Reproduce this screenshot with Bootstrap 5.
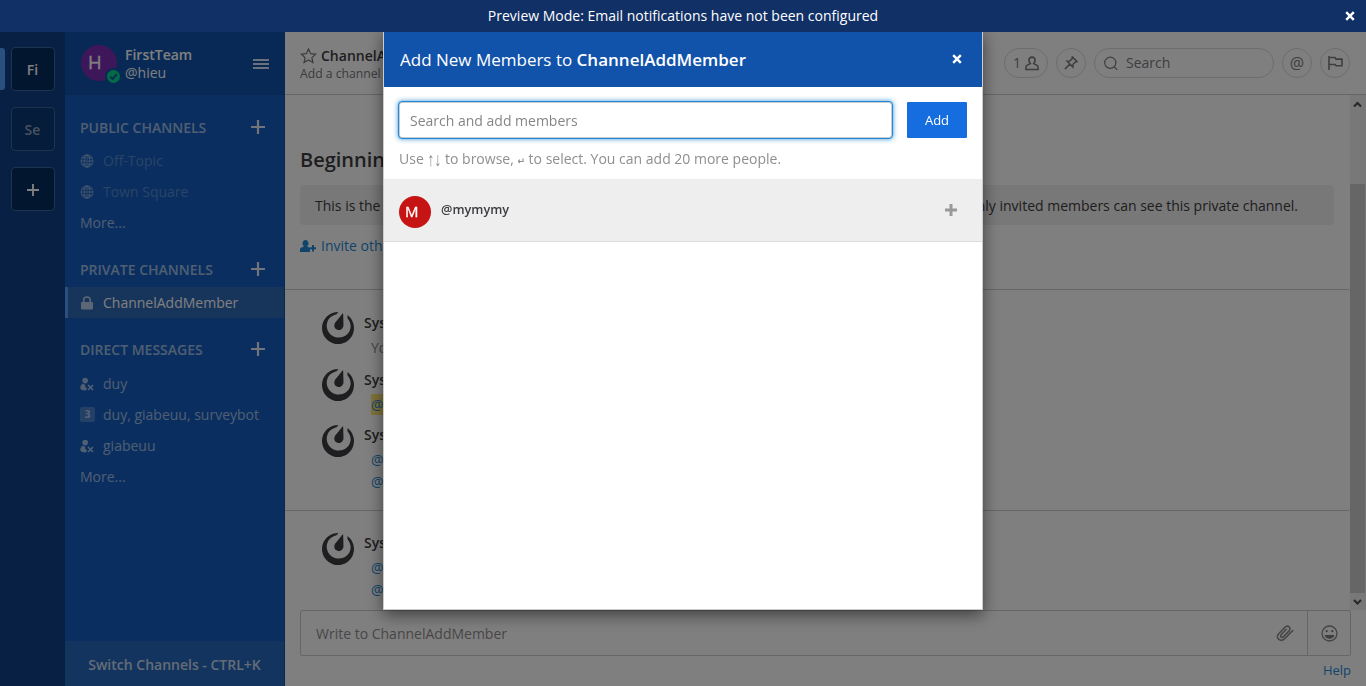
<!DOCTYPE html>
<html lang="en">
<head>
<meta charset="utf-8">
<title>ChannelAddMember - FirstTeam</title>
<link href="https://cdn.jsdelivr.net/npm/bootstrap@5.3.0/dist/css/bootstrap.min.css" rel="stylesheet">
<style>
body{font-family:"Open Sans",sans-serif;font-size:14px;line-height:20px;color:#3d3c40;height:100vh;overflow:hidden}
svg{display:block;flex:none}
a{color:#2389d7;text-decoration:none}
.announce{height:32px;background:#113066;z-index:1070;position:relative}
.announce-close{right:11px}
.app-row{height:654px}
.teams{width:65px;background:#0e4187;padding-top:15px;gap:16px}
.team-tile{width:44px;height:44px;border:1px solid #3b679f;border-radius:4px;color:rgba(255,255,255,.55);background:#0b3875;font-weight:600;padding-top:2px}
.team-tile.dark-tile{background:#062c61;color:#fff}
.team-mark{left:0;top:16px;width:5px;height:42px;background:#579eff;border-radius:0 3px 3px 0}
.side{width:220px;background:#145dbf;color:rgba(255,255,255,.6);border-right:1px solid #1253aa}
.side-head{height:63px;background:#1153ab;padding:13px 15px 0 16px;color:#fff}
.side-head .names{line-height:18px;padding-top:1px}
.side-head .bars{margin-top:14px}
.face{width:36px;height:36px;border-radius:50%;background:#7b2eb3;font-size:18.5px;line-height:34px;padding-left:7px;-webkit-text-stroke:.3px #fff}
.presence{left:24px;top:23px}
.sect{height:49px;padding:22px 19px 0 15px;font-weight:600}
.sect.tall{height:50px}
.sect.first{padding-top:23px}
.sect svg{color:#e3ebf6;margin-top:2px}
.chan{height:31px;padding-left:15px}
.chan .ico{width:23px}
.muted-chan{color:rgba(255,255,255,.28)}
.chan.current{background:#2f6ab7;border-left:3px solid #579eff;padding-left:12px;color:#fff}
.count{width:15px;height:15px;border-radius:2px;background:rgba(255,255,255,.22);font-size:10px;line-height:15px;font-weight:700;text-align:center}
.switcher{height:45px;background:#2769bd;color:rgba(255,255,255,.75);font-weight:600;padding:2px 0 0 0}
.top-bar{height:63px;border-bottom:1px solid #ccc;padding:0 16px 0 15px}
.chan-title{line-height:18px;padding-top:3px}
.topic{font-size:12.2px;color:#77767a}
.pill{height:30px;border:1px solid #dadada;border-radius:15px;color:#7d7c7f}
.round{width:30px}
.feed{height:515px;overflow:hidden}
.intro{height:195px;padding:54px 15px 0;border-bottom:1px solid #ccc}
.intro h4{font-size:20px;font-weight:600;line-height:22px}
.notice{background:#f0f0f0;border-radius:4px;height:40px;padding:2px 36px 0 15px;margin-top:14px}
.post{padding-left:37px;line-height:22px}
.post svg{margin-right:10px;fill:#3d3c40}
.raised{margin-top:-1px}
.said{margin:3px 0 0 7px}
.tag{background:#ffe577;padding:1px 0}
.scroller{width:16px;background:#f1f1f1}
.thumb{width:15px;margin-top:71px;height:409px;background:#cdcdcd}
.composer{height:46px;border:1px solid #ccc;border-radius:2px;margin:0 15px;color:#8f8e90}
.composer .prompt{padding:2px 0 0 15px}
.emoji{width:43px;border-left:1px solid #ccc}
.help-row{padding:4px 15px 0;font-size:13px}
.modal-backdrop{opacity:.5!important}
.modal-dialog{width:600px;max-width:600px;margin:30px auto 0}
.modal-content{height:580px;border:1px solid rgba(0,0,0,.2);border-radius:0;background-clip:border-box;box-shadow:0 5px 15px rgba(0,0,0,.5);color:#3d3c40}
.modal-header{height:56px;background:#1153ab;color:#fff;border:0;border-radius:0;padding:2px 20px 0 16px;font-size:17px}
.modal-header svg{margin-top:-2px}
.find-row{padding:15px 15px 0}
.finder{width:493px;height:36px;border:1px solid #ccc;border-radius:3px;padding:0 10px;font-size:14px;outline:1px solid #2389d7;box-shadow:0 0 5px 1px rgba(35,137,215,.9)}
.finder::placeholder{color:#858585}
.btn-add{width:60px;height:36px;background:#166de0;color:#fff;border:0;border-radius:1px;font-size:13px;padding:2px 0 0}
.hint{color:#8f8e90;margin-top:11px;padding:0 15px;height:20px}
.arrows{font-family:"Liberation Sans",sans-serif;display:inline-block;line-height:16px;transform:scaleY(1.4)}
.enter{font:bold 9px "DejaVu Sans",sans-serif}
.person{height:63px;background:#eee;border-bottom:1px solid #ddd;margin-top:10px;padding:0 25px 0 15px}
.person-face{width:32px;height:32px;border-radius:50%;background:#c61414;color:#fff;font-size:15px;line-height:31px;padding-left:6px;margin-top:4px;-webkit-text-stroke:.3px #fff}
.person b{font-size:12.7px;margin:0 0 2px 10px}
.person svg{margin-bottom:1px}
</style>
</head>
<body>
<svg class="d-none">
<symbol id="mm" viewBox="0 0 24 24"><path d="M12.081 0C7.048-.034 2.339 3.125.637 8.153c-2.125 6.276 1.24 13.086 7.516 15.21 6.276 2.125 13.086-1.24 15.21-7.516 1.727-5.1-.172-10.552-4.311-13.557l.126 2.547c2.065 2.282 2.88 5.512 1.852 8.549-1.534 4.532-6.594 6.915-11.3 5.321-4.708-1.593-7.28-6.559-5.745-11.092 1.031-3.046 3.655-5.121 6.694-5.67l1.642-1.94A4.87 4.87 0 0 0 12.08 0zm3.528 1.094a.284.284 0 0 0-.123.024l-.004.001a.33.33 0 0 0-.109.071c-.145.142-.657.828-.657.828L13.6 3.4l-1.3 1.585-2.232 2.776s-1.024 1.278-.798 2.851c.226 1.574 1.396 2.34 2.304 2.648.907.307 2.302.408 3.438-.704 1.135-1.112 1.098-2.75 1.098-2.75l-.087-3.56-.07-2.05-.047-1.775s.01-.856-.02-1.057a.33.33 0 0 0-.035-.107l-.006-.012-.007-.011a.277.277 0 0 0-.229-.14z"/></symbol>
<symbol id="plus" viewBox="0 0 14 14"><path d="M7 0v14M0 7h14" stroke="currentColor" stroke-width="2.2"/></symbol>
<symbol id="globe" viewBox="0 0 14 14"><g fill="none" stroke="currentColor" stroke-width="1.4"><circle cx="7" cy="7" r="6"/><ellipse cx="7" cy="7" rx="2.8" ry="6"/><path d="M1 7h12M7 1v12M2 3.8h10M2 10.2h10"/></g></symbol>
<symbol id="gone" viewBox="0 0 14 14"><circle cx="5.200" cy="3.600" r="2.800" fill="currentColor"/><path d="M2.600 6.400 5.400 8 5 9.500 7 11.200 6 13.500Q1 13.700.3 11.300 0 8.500 2.600 6.400z" fill="currentColor"/><path d="m8 8 5 5m0-5-5 5" stroke="currentColor" stroke-width="1.700"/></symbol>
<symbol id="cross" viewBox="0 0 10 10"><path d="m1.200 1.200 7.600 7.600m0-7.600L1.200 8.800" stroke="currentColor" stroke-width="2.400"/></symbol>
</svg>

<div class="announce d-flex align-items-center justify-content-center text-white">Preview Mode: Email notifications have not been configured
  <svg class="announce-close position-absolute" width="10" height="10"><use href="#cross"/></svg>
</div>

<div class="app-row d-flex">
  <nav class="teams d-flex flex-column align-items-center position-relative">
    <span class="team-mark position-absolute"></span>
    <div class="team-tile dark-tile d-flex align-items-center justify-content-center">Fi</div>
    <div class="team-tile d-flex align-items-center justify-content-center">Se</div>
    <div class="team-tile dark-tile d-flex align-items-center justify-content-center"><svg width="12" height="12"><use href="#plus"/></svg></div>
  </nav>

  <aside class="side d-flex flex-column">
    <div class="side-head d-flex">
      <div class="position-relative"><div class="face">H</div>
        <svg class="presence position-absolute" width="17" height="17" viewBox="0 0 17 17"><circle cx="8.500" cy="8.500" r="8.500" fill="#1153ab"/><circle cx="8.500" cy="8.500" r="6.500" fill="#06d68b"/><path d="m5.300 8.600 2.300 2.300 4.200-4.600" fill="none" stroke="#1153ab" stroke-width="1.900"/></svg>
      </div>
      <div class="names ms-2 flex-grow-1"><div class="fw-semibold">FirstTeam</div><div>@hieu</div></div>
      <svg class="bars" width="16" height="10" viewBox="0 0 16 10" fill="#d9e4f3"><path d="M0 0h16v2H0zM0 4h16v2H0zM0 8h16v2H0z"/></svg>
    </div>
    <div class="sect tall first d-flex justify-content-between">PUBLIC CHANNELS<svg width="14" height="14"><use href="#plus"/></svg></div>
    <div class="chan muted-chan d-flex align-items-center"><span class="ico"><svg width="14" height="14"><use href="#globe"/></svg></span>Off-Topic</div>
    <div class="chan muted-chan d-flex align-items-center"><span class="ico"><svg width="14" height="14"><use href="#globe"/></svg></span>Town Square</div>
    <div class="chan d-flex align-items-center">More...</div>
    <div class="sect d-flex justify-content-between">PRIVATE CHANNELS<svg width="14" height="14"><use href="#plus"/></svg></div>
    <div class="chan current d-flex align-items-center"><span class="ico"><svg width="14" height="14" viewBox="0 0 14 14"><path d="M1.500 6h11q.5 0 .5.500v6q0 1-1 1H2q-1 0-1-1v-6q0-.500.500-.500z" fill="#b9cde8"/><path d="M3.700 6V4.300a3.200 3.200 0 0 1 6.500 0V6" fill="none" stroke="#b9cde8" stroke-width="1.600"/></svg></span>ChannelAddMember</div>
    <div class="sect tall d-flex justify-content-between">DIRECT MESSAGES<svg width="14" height="14"><use href="#plus"/></svg></div>
    <div class="chan d-flex align-items-center"><span class="ico"><svg width="14" height="14"><use href="#gone"/></svg></span>duy</div>
    <div class="chan d-flex align-items-center"><span class="ico"><div class="count">3</div></span>duy, giabeuu, surveybot</div>
    <div class="chan d-flex align-items-center"><span class="ico"><svg width="14" height="14"><use href="#gone"/></svg></span>giabeuu</div>
    <div class="chan d-flex align-items-center">More...</div>
    <div class="switcher mt-auto d-flex align-items-center justify-content-center">Switch Channels - CTRL+K</div>
  </aside>

  <main class="flex-grow-1 bg-white">
    <header class="top-bar d-flex align-items-center">
      <div class="chan-title me-auto text-nowrap">
        <div class="d-flex align-items-center fw-semibold"><svg class="me-1" width="17" height="16" viewBox="0 0 17 16"><path d="m8.500 1 2.100 4.700 5.100.500-3.800 3.400 1.100 5L8.500 12 4 14.600l1.100-5L1.300 6.200l5.100-.500z" fill="none" stroke="#77767a" stroke-width="1.200"/></svg>ChannelA</div>
        <div class="topic">Add a channel</div>
      </div>
      <div class="pill d-flex align-items-center justify-content-center gap-1" style="width:44px">1<svg width="14" height="15" viewBox="0 0 15 15"><path d="M4.300 4.200a3.200 3.500 0 0 1 6.400 0c0 1.600-.7 2.600-1.400 3.400l4 2.100q.7.500.7 4.300H1q0-3.800.7-4.300l4-2.100C5 6.800 4.300 5.800 4.300 4.200z" fill="none" stroke="currentColor" stroke-width="1.700"/></svg></div>
      <div class="pill round ms-2 d-flex align-items-center justify-content-center"><svg width="14" height="14" viewBox="0 0 14 14" fill="none" stroke="currentColor" stroke-width="1.500"><path d="m8.300.9 4.800 4.800-1.600.2-2.500 2.400-.1 2.800L3.100 5.200l2.700-.1 2.400-2.500zM5.700 8.300.9 13.100"/></svg></div>
      <div class="pill ms-2 d-flex align-items-center" style="width:180px;padding-left:9px"><svg class="me-2" width="14" height="14" viewBox="0 0 14 14" fill="none" stroke="currentColor" stroke-width="1.200"><circle cx="6.300" cy="6.800" r="5.600"/><path d="m10.300 10.800 3 3"/></svg>Search</div>
      <div class="pill round ms-2 fs-6 d-flex align-items-center justify-content-center">@</div>
      <div class="pill round ms-2 d-flex align-items-center justify-content-center"><svg width="15" height="14" viewBox="0 0 15 14" fill="none" stroke="currentColor" stroke-width="1.600"><path d="M1 0v14M1 1.500h6l1 1.600h6v6.700H8L7 8.500H1"/></svg></div>
    </header>
    <div class="feed d-flex">
      <div class="flex-grow-1 overflow-hidden" style="margin-right:1px">
        <div class="intro"><h4 class="mb-0">Beginnin</h4>
          <div class="notice d-flex align-items-center justify-content-between text-nowrap"><span>This is the</span><span>Only invited members can see this private channel.</span></div>
          <a class="d-flex align-items-center" href="#" style="margin-top:11px"><svg width="16" height="13" viewBox="0 0 16 13" fill="currentColor" style="margin-right:5px"><path d="M5.500 0a3 3.300 0 0 1 2 5.800v1l2.500.9V12H0V9q0-1.200 3.500-2.300v-1A3 3.300 0 0 1 5.500 0zM12 5h2v2.200h2v2h-2v2.300h-2V9.200h-2v-2h2z"/></svg>Invite oth</a>
        </div>
        <div class="post d-flex" style="height:79px;padding-top:22px"><svg width="32" height="32"><use href="#mm"/></svg><div><b class="fw-semibold">Sys</b><div class="said" style="color:#8b8a8c">Yo</div></div></div>
        <div class="post d-flex" style="height:56px"><svg width="32" height="32"><use href="#mm"/></svg><div><b class="fw-semibold">Sys</b><div class="said"><a class="tag" href="#">@</a></div></div></div>
        <div class="post d-flex border-bottom" style="height:86px;border-color:#ccc!important"><svg width="32" height="32"><use href="#mm"/></svg><div class="raised"><b class="fw-semibold">Sys</b><div class="said"><a href="#">@</a><br><a href="#">@</a></div></div></div>
        <div class="post d-flex" style="padding-top:22px"><svg width="32" height="32"><use href="#mm"/></svg><div class="raised"><b class="fw-semibold">Sys</b><div class="said"><a href="#">@</a><br><a href="#">@</a></div></div></div>
      </div>
      <div class="scroller d-flex flex-column">
        <svg width="15" height="18" viewBox="0 0 15 18"><path d="m4 11.500 3.500-3.500 3.500 3.500" fill="none" stroke="#505050" stroke-width="2.200"/></svg>
        <div class="thumb"></div>
        <svg width="15" height="17" viewBox="0 0 15 17"><path d="m4 7 3.500 3.500L11 7" fill="none" stroke="#505050" stroke-width="2.200"/></svg>
      </div>
    </div>
    <div class="composer d-flex align-items-center"><span class="prompt me-auto">Write to ChannelAddMember</span>
      <svg width="18" height="17" viewBox="0 0 18 17" style="margin-right:13px" fill="none" stroke="currentColor" stroke-width="1.600" stroke-linecap="round"><path d="m16.800 5.500-7.600 7.800c-4.600 4.800-10.200-.4-6.700-4.300L8.600 2.600c3.400-3.400 7.200.4 4.400 3.500l-5.400 5.500c-1.900 1.900-4.200-.1-2.300-2.100l4.800-5"/></svg>
      <div class="emoji h-100 d-flex align-items-center justify-content-center"><svg width="17" height="17" viewBox="0 0 17 17"><circle cx="8.500" cy="8.500" r="7.500" fill="none" stroke="#8b8a8d" stroke-width="1.300"/><circle cx="5.700" cy="6.200" r="1.100" fill="#7d7c7f"/><circle cx="11.300" cy="6.200" r="1.100" fill="#7d7c7f"/><path d="M3.500 10h10q-1.300 3.800-5 3.800t-5-3.800z" fill="#7d7c7f"/></svg></div>
    </div>
    <div class="help-row text-end"><a href="#">Help</a></div>
  </main>
</div>

<div class="modal-backdrop show"></div>
<div class="modal show d-block overflow-hidden" tabindex="-1">
  <div class="modal-dialog">
    <div class="modal-content">
      <div class="modal-header d-flex align-items-center"><span>Add New Members to <b class="fw-semibold">ChannelAddMember</b></span><svg width="10" height="10"><use href="#cross"/></svg></div>
      <div class="find-row d-flex justify-content-between align-items-center"><input class="finder" placeholder="Search and add members"><button class="btn btn-add">Add</button></div>
      <div class="hint">Use <span class="arrows">↑↓</span> to browse, <span class="enter">↵</span> to select. You can add 20 more people.</div>
      <div class="person d-flex align-items-center"><div class="person-face">M</div><b class="fw-semibold me-auto">@mymymy</b><svg width="12" height="12" viewBox="0 0 12 12"><path d="M6 0v12M0 6h12" stroke="#999" stroke-width="3"/></svg></div>
    </div>
  </div>
</div>
<script src="https://cdn.jsdelivr.net/npm/bootstrap@5.3.0/dist/js/bootstrap.bundle.min.js"></script>
</body>
</html>
